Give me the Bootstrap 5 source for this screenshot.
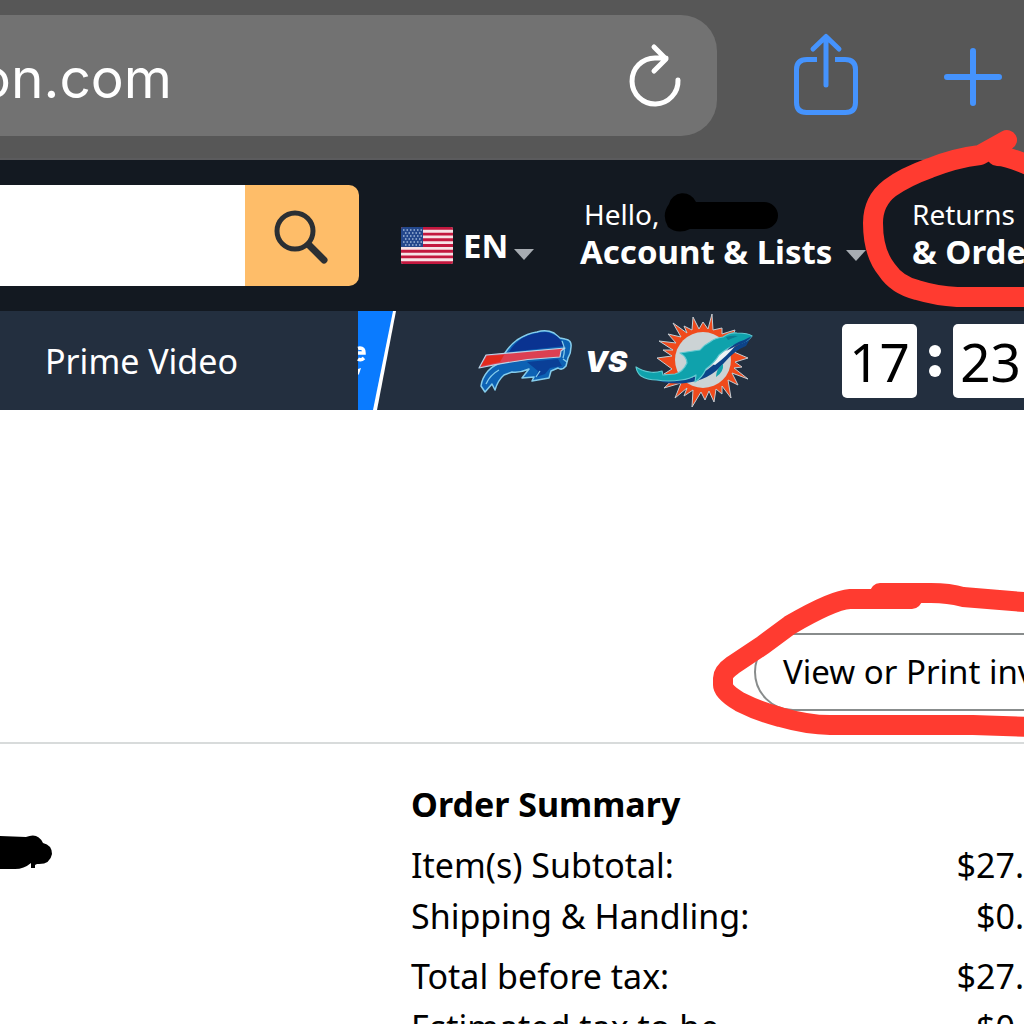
<!DOCTYPE html>
<html lang="en">
<head>
<meta charset="utf-8">
<meta name="viewport" content="width=device-width, initial-scale=1">
<title>Order details</title>
<link rel="stylesheet" href="https://cdn.jsdelivr.net/npm/bootstrap@5.3.0/dist/css/bootstrap.min.css">
<style>
  body { font-family: "Noto Sans", sans-serif; color: #000; background: #fff; }
  a { color: inherit; text-decoration: none; }
  svg { display: block; flex: none; overflow: visible; }
  .shell { height: 100vh; overflow: hidden; }
  .icon-btn { border: 0; padding: 0; background: none; }

  .browser-bar { background: #575757; padding: 15px 22px 22px 0; border-bottom: 2px solid #5b5b5d; }
  .address { background: #727272; height: 121px; border-radius: 0 36px 36px 0; margin-right: 76px; padding-right: 36px; }
  .address-text { font-family: Inter, sans-serif; font-size: 55px; line-height: 64px; color: #fff; width: 172px; padding-top: 4px; }
  .new-tab { margin-left: 87px; }

  .store-bar { background: #131921; height: 151px; color: #fff; }
  .search { height: 101px; }
  .search input { border: 0; border-radius: 0; background: #fff; min-width: 0; }
  .search button { width: 114px; background: #febd69; border-radius: 0 10px 10px 0; }
  .lang { margin-left: 42px; width: 133px; margin-top: 20px; gap: 10px; }
  .line-one { font-size: 28px; line-height: 37px; }
  .line-two { font-size: 33px; line-height: 37px; font-weight: 700; }
  .account { margin-left: 46px; width: 286px; padding-bottom: 6px; }
  .account .line-one { padding-left: 4px; }
  .returns { margin-left: 46px; width: 112px; padding-bottom: 6px; }
  .cover { position: absolute; left: 85px; top: -5px; }
  .ring { position: absolute; z-index: 2; pointer-events: none; }
  .ring-returns { left: -52px; top: -35px; }
  .ring-invoice { left: -44px; top: -53px; }

  .sub-bar { background: #232f3f; height: 99px; color: #fff; }
  .sub-link { font-size: 34px; line-height: 44px; padding-left: 45px; }
  .promo { width: 666px; }
  .promo > * { flex: none; }
  .promo-edge { width: 40px; margin-right: 78px; }
  .versus { font-family: Inter, sans-serif; font-weight: 900; font-style: italic; font-size: 29px; width: 50px; margin-left: 13px; padding-top: 3px; }
  .clock { margin-left: 89px; }
  .digits { background: #fff; color: #000; width: 75px; height: 74px; border-radius: 5px; font-size: 53px; line-height: 76px; }
  .colon { width: 36px; gap: 8px; }
  .colon i { width: 12px; height: 12px; border-radius: 50%; background: #fff; }

  .invoice-area { padding: 223px 0 31px; border-bottom: 2px solid #d8dbdb; }
  .invoice { width: 270px; }
  .invoice button { width: 360px; height: 78px; border: 2px solid #888c8c; border-radius: 39px; background: #fff; padding: 0 0 0 27px; font-size: 33px; color: #000; }
  .address-col { width: 411px; padding-top: 91px; }
  .summary { padding-top: 38px; }
  .summary h1 { font-size: 34px; line-height: 44px; font-weight: 700; margin: 0 0 14px; }
  .summary th, .summary td { font-size: 34px; line-height: 51px; font-weight: 400; padding: 0; }
  .summary td { text-align: right; }
  .summary .group-start > * { padding-top: 9px; }
</style>
<script src="https://cdn.jsdelivr.net/npm/bootstrap@5.3.0/dist/js/bootstrap.bundle.min.js"></script>
</head>
<body>
<div class="shell">

  <div class="browser-bar d-flex align-items-center">
    <div class="address flex-grow-1 d-flex align-items-center justify-content-between">
      <div class="address-text d-flex justify-content-end text-nowrap"><span>amazon.com</span></div>
      <button class="icon-btn" type="button" aria-label="Reload">
        <svg width="54" height="64" viewBox="627 43 54 64" fill="none" stroke="#fff" stroke-width="5" stroke-linecap="round" stroke-linejoin="round"><path d="M678 79a23 23 0 1 1-23-22h11M654 46l12 12-12 12"/></svg>
      </button>
    </div>
    <button class="icon-btn" type="button" aria-label="Share">
      <svg width="64" height="84" viewBox="793 34 64 84" fill="none" stroke="#4593fd" stroke-width="5"><path d="M817 59.500h-10q-10.500 0-10.500 10v33q0 10 10 10h39q10 0 10-10v-33q0-10-10.500-10h-10"/><path stroke-linecap="round" stroke-linejoin="round" d="M826 85V37M813 49l13-12.500L839 49"/></svg>
    </button>
    <button class="icon-btn new-tab" type="button" aria-label="New tab">
      <svg width="58" height="60" viewBox="0 0 58 60" stroke="#4593fd" stroke-width="6" stroke-linecap="round"><path d="M3 31h52M29 5v52"/></svg>
    </button>
  </div>

  <header class="store-bar d-flex align-items-center">
    <form class="search d-flex flex-grow-1">
      <input class="flex-grow-1" type="search" aria-label="Search">
      <button class="icon-btn d-flex align-items-center justify-content-center" type="button" aria-label="Go">
        <svg width="56" height="56" viewBox="0 0 56 56" fill="none" stroke="#2b2f33"><circle cx="21" cy="23" r="18" stroke-width="5"/><path d="M35 37l15 15" stroke-width="7" stroke-linecap="round"/></svg>
      </button>
    </form>
    <a href="#" class="lang d-flex align-items-center">
      <svg width="52" height="37" viewBox="0 0 52 37"><defs><clipPath id="flagClip"><rect width="52" height="37" rx="2"/></clipPath></defs><g clip-path="url(#flagClip)"><path fill="#f6e3e7" d="M0 0h52v37H0z"/><path stroke="#c3183f" stroke-width="2.900" d="M0 1.400h52M0 7.100h52M0 12.800h52M0 18.500h52M0 24.200h52M0 29.900h52M0 35.600h52"/><path fill="#24488c" d="M0 0h22v20H0z"/><path stroke="#9fb6d6" stroke-width="1.500" stroke-dasharray="1.500 2" d="M2 3h19M4 6h17M2 9h19M4 12h17M2 15h19M4 18h17"/></g></svg>
      <span class="line-two">EN</span>
      <svg class="mt-3" width="20" height="11" viewBox="4 -1 20 11"><path fill="#a7acb2" d="M0 0h20L10 11z"/></svg>
    </a>
    <a href="#" class="account position-relative text-nowrap">
      <div class="line-one">Hello,</div>
      <div class="line-two d-flex align-items-center justify-content-between">Account &amp; Lists <svg class="mt-2" width="20" height="11" viewBox="0 0 20 11"><path fill="#a7acb2" d="M0 0h20L10 11z"/></svg></div>
      <svg class="cover" width="114" height="42" viewBox="665 192 114 42"><path d="M669 205a14 13 0 0 1 27-2h68a14 13.500 0 0 1 0 27h-74q-12 6-22-2-7-12 1-23z"/></svg>
    </a>
    <div class="returns position-relative align-self-stretch d-flex align-items-center text-nowrap">
      <a href="#">
        <div class="line-one">Returns</div>
        <div class="line-two">&amp; Orders</div>
      </a>
      <svg class="ring ring-returns" width="164" height="185" viewBox="860 125 164 185" fill="none" stroke="#ff3b30" stroke-width="20" stroke-linecap="round" stroke-linejoin="round"><path d="M1007 140l-27 15q-25 3-50 13-25 9-40 20-17 13-17 35 0 30 14 47 10 15 30 20 20 6 40 7h80M997 156q12 0 40 13"/></svg>
    </div>
  </header>

  <nav class="sub-bar d-flex align-items-center justify-content-between">
    <a href="#" class="sub-link text-nowrap">Prime Video</a>
    <div class="promo d-flex align-items-center text-nowrap">
      <svg class="promo-edge" width="40" height="99" viewBox="0 0 40 99"><path fill="#0a7bff" d="M0 0h36L17 99H0z"/><path fill="#fff" d="M35 0h3L19 99h-4z"/><path fill="none" stroke="#fff" stroke-width="3.500" d="M0 42h6q0-5-4-5l-2 .5M6 47q-3 3-6 1"/><path fill="#fff" d="M0 58l3-1-2 6-1 1z"/></svg>
      <svg width="96" height="66" viewBox="476 327 96 66" stroke-linejoin="round">
        <path fill="#0d62b4" stroke="#86cdec" stroke-width="1.500" d="M505 352Q510 344 517 339Q528 332 537 331Q546 328 554 332L560 337L565 338Q572 339 571 346Q571 352 568 357L566 365Q562 370 558 367L551 370L549 377L532 380L534 376L522 377L529 368Q520 372 512 371L504 374Q498 379 495 389L492 383L485 391L481 385Q482 377 488 370Q494 363 505 361z"/>
        <path fill="#0a3391" d="M509 351Q520 332 546 331Q557 333 562 341L565 345z"/>
        <path fill="#0a3f97" d="M527 361l31-3 4 7-12 2-5 6-9 3 2-6z"/>
        <path fill="none" stroke="#86cdec" stroke-width="1.300" d="M486 383q4-9 13-14M540 370l-4 6M562 340q4 8 1 17M563 358l4 3"/>
        <path fill="#dc4052" stroke="#b8d5e9" stroke-width="1.200" d="M486 354L565 347L561 350L560 356Q520 358 479 367z"/>
        <path fill="#e3291c" d="M487 355l17-1-4 7-19 4z"/>
      </svg>
      <span class="versus">VS</span>
      <svg width="118" height="92" viewBox="635 315 118 92" stroke-linejoin="round">
        <path fill="#f04a1c" stroke="#c3cdd3" stroke-width="1" d="M712 314L713 330L722 328L722 334L735 330L730 343L747 342L734 352L748 358L735 362L742 367L734 368L748 379L732 373L738 385L728 380L731 398L722 386L722 394L716 389L714 402L709 391L705 400L701 392L692 407L693 390L684 396L687 388L675 398L681 383L664 388L676 377L664 374L672 369L657 358L672 356L663 350L673 350L659 341L676 343L668 334L681 337L673 323L687 333L684 326L692 330L693 317L699 329L703 322L708 329z"/>
        <circle cx="703" cy="360" r="28" fill="#ccd3d5"/>
        <path fill="#0d4388" d="M750 339Q735 345 721 357Q703 378 680 380L655 380Q670 385 686 383Q710 380 724 363Q735 350 746 346z"/>
        <path fill="#eef3f5" d="M712 364Q721 351 736 345Q727 356 715 365z"/>
        <path fill="#0fa2ac" stroke="#5fc9d1" stroke-width="1.200" d="M752 336Q748 333 737 333Q730 332 723 337Q715 338 710 342Q704 345 700 350L680 353Q687 357 687 363Q683 372 675 374L663 375L662 371Q655 373 650 372Q642 371 636 367Q637 373 641 376Q647 380 657 380Q668 382 681 380Q690 379 696 375L695 382Q702 378 706 369Q715 362 719 355Q728 347 738 344Q748 342 752 336z"/>
        <path fill="#0d4388" d="M752 336q-5 7-14 9l-12 6q8-8 18-11z"/>
        <path fill="#0b7e93" d="M726 337q6-2 12-1l-10 4z"/>
        <path fill="#0fa2ac" d="M716 377Q716 369 723 364Q724 372 716 377z"/>
      </svg>
      <div class="clock d-flex">
        <div class="digits text-center">17</div>
        <div class="colon d-flex flex-column align-items-center justify-content-center"><i></i><i></i></div>
        <div class="digits text-center">23</div>
      </div>
    </div>
  </nav>

  <main>
    <div class="invoice-area d-flex justify-content-end">
      <div class="invoice position-relative">
        <button type="button" class="text-start text-nowrap">View or Print invoice</button>
        <svg class="ring ring-invoice" width="314" height="165" viewBox="710 580 314 165" fill="none" stroke="#ff3b30" stroke-width="20" stroke-linecap="round" stroke-linejoin="round"><path d="M1035 603l-72-6q-14-4-32-4h-51M912 599h-62q-17 1-60 26l-27 20-30 20q-10 7-10 13v7q0 7 17 17 20 10 40 15 28 8 50 8h143l62 2"/></svg>
      </div>
    </div>
    <div class="d-flex">
      <div class="address-col flex-shrink-0">
        <svg width="54" height="36" viewBox="0 834 54 36"><path d="M0 835l26 1q12-5 17 6 9 2 9 11-2 11-15 10l-2 1v3h-4v-5q-7 6-16 6H0z"/></svg>
      </div>
      <section class="summary flex-grow-1">
        <h1>Order Summary</h1>
        <table class="w-100 text-nowrap">
          <tbody>
            <tr><th scope="row">Item(s) Subtotal:</th><td>$27.</td></tr>
            <tr><th scope="row">Shipping &amp; Handling:</th><td>$0.</td></tr>
            <tr class="group-start"><th scope="row">Total before tax:</th><td>$27.</td></tr>
            <tr><th scope="row">Estimated tax to be</th><td>$0.</td></tr>
          </tbody>
        </table>
      </section>
    </div>
  </main>
</div>
</body>
</html>
